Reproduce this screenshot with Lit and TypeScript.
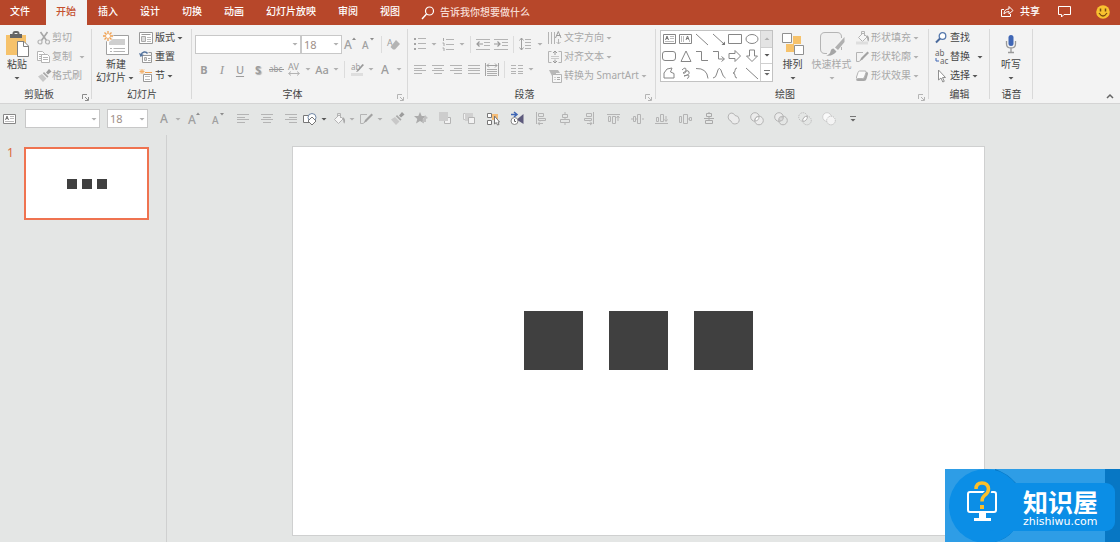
import { LitElement, html, svg, css, nothing } from "lit";
import type { SVGTemplateResult, TemplateResult } from "lit";
import { customElement } from "lit/decorators.js";

type Icon = { w: number; h: number; d: SVGTemplateResult };
const G = "#b4b4b4";
const S = "#868686";
const B = "#3f66b5";
const O = "#f6c26b";

const lines = (ys: number[], xs: [number, number][], c = G) =>
  ys.map((y, i) => svg`<path d="M${xs[i % xs.length][0]} ${y}.5H${xs[i % xs.length][1]}" stroke=${c} fill="none"/>`);

const letterUp = (up: boolean): SVGTemplateResult => svg`
  <text x="0" y="13" font-size=${up ? 12 : 10} fill="#a0a0a0" font-family="Noto Sans" font-weight="500">A</text>
  ${up ? svg`<path d="M8 4l2-2.5 2 2.5z" fill="#8c8c8c"/>` : svg`<path d="M8 2l2 2.5 2-2.5z" fill="#8c8c8c"/>`}`;

const bucket = svg`<path d="M3.500 7.500L8 3l4 4-4.500 4.500z" fill="#f6f6f6" stroke=${G}/><path d="M6.500 5V1.500h3V6" fill="none" stroke=${G}/><path d="M11.500 5c3 1.500 3 4 2 6.500C12 11 12.500 8 11.500 5z" fill="#a8a8a8"/>`;
const pen = svg`<path d="M8 2.500H1.500v9H4l4-3" fill="none" stroke=${G}/><path d="M12.500 1.500L6 8 5 10.500 7.500 9.500 14 3z" fill="#a2a2a2"/>`;
const brush = svg`<path d="M12 0l2.500 2.500L11 5.500 9 3.500z" fill="#9c9c9c"/><path d="M7 3l4.500 4.500-1.200 1.200L5.800 4.200z" fill="#a8a8a8"/><path d="M5 5l4.500 4.500L6 13 1 7.500z" fill="#c8c8c8"/>`;

const icons: Record<string, Icon> = {
  paste: { w: 24, h: 26, d: svg`<path d="M1 4h20v20H1z" fill=${O}/><path d="M5 3h12v4H5z" fill="#666"/><path d="M8.500 4V2.500Q8.500 1 10 1h2q1.500 0 1.500 1.500V4" fill="none" stroke="#666" stroke-width="2"/><path d="M12.500 10.500h6.500l4.500 4.500v10.500h-11z" fill="#fff" stroke="#808080"/><path d="M18.500 10.500v5h5" fill="none" stroke="#808080"/>` },
  cut: { w: 14, h: 14, d: svg`<path d="M3.500 1l6 8.500M10.500 1l-6 8.500" stroke="#a6a6a6" stroke-width="1.600"/><circle cx="3" cy="11" r="2" fill="none" stroke=${G} stroke-width="1.200"/><circle cx="10.500" cy="11" r="2" fill="none" stroke=${G} stroke-width="1.200"/>` },
  copy: { w: 14, h: 14, d: svg`<path d="M.5 1.500h5l2 2v7h-7z" fill="#fff" stroke=${G}/><path d="M2 4.500h3M2 6.500h3M2 8.500h3" stroke=${G}/><path d="M4.500 4.500h6l2 2v6h-8z" fill="#fff" stroke=${G}/><path d="M6 7.500h5M6 9.500h5" stroke=${G}/>` },
  brush: { w: 15, h: 14, d: brush },
  newSlide: { w: 26, h: 25, d: svg`<path d="M3.500 4.500h22v19h-22z" fill="#fff" stroke="#a0a0a0"/><path d="M9 8h13v6H6v-3z" fill="#cfcfcf"/><path d="M7 17.500h2M10.500 17.500H22M7 20.500h2M10.500 20.500H22" stroke="#b4b4b4"/><circle cx="5" cy="5" r="5.500" fill="#f3f3f3"/><path d="M5 0v10M0 5h10M1.500 1.500l7 7M8.500 1.500l-7 7" stroke="#f0a050" stroke-width="1.300"/><circle cx="5" cy="5" r="2" fill="#fff"/>` },
  layout: { w: 14, h: 14, d: svg`<path d="M.5 1.500h13v11H.5z" fill="#fff" stroke="#999"/><path d="M2.500 3.500h9" stroke="#999"/><path d="M2.500 5.500h4v5h-4z" fill="#ddd" stroke="#aaa"/><path d="M8 6.500h4M8 8.500h4M8 10.500h4" stroke="#bbb"/>` },
  reset: { w: 14, h: 14, d: svg`<path d="M3.500 5.500h9v7h-9z" fill="#fff" stroke="#999"/><path d="M5.500 7.500h2v3h-2z" fill="#ddd" stroke="#aaa"/><path d="M9 8.500h2.500M9 10.500h2.500" stroke="#aaa"/><path d="M2 5C3 1.500 7 1 8.500 3.500" fill="none" stroke="#56759f" stroke-width="1.500"/><path d="M0 3l1.500 4L5 5z" fill="#56759f"/><path d="M9.500 2.500h3v3" fill="none" stroke="#999"/>` },
  section: { w: 14, h: 14, d: svg`<path d="M3 0v5M.5 2.500h5M1 .5l4 4M5 .5l-4 4" stroke="#f2b06a"/><path d="M6 3.500h7" stroke="#f0a050"/><path d="M4.500 5.500h8v7h-8z" fill="#fff" stroke="#999"/><path d="M6 7.500h5M6 10.500h5" stroke="#bbb"/>` },
  up: { w: 14, h: 16, d: letterUp(true) },
  down: { w: 14, h: 16, d: letterUp(false) },
  clear: { w: 14, h: 14, d: svg`<text x="0" y="9" font-size="9" fill="#a0a0a0" font-family="Noto Sans">A</text><path d="M9 3l4 4-5 5.500H6L3.500 10z" fill="#b4b4b4"/>` },
  spacing: { w: 14, h: 14, d: svg`<text x="1" y="8" font-size="9" fill="#999" font-family="Noto Sans">AV</text><path d="M2 11.500h10M4 9.500l-2.500 2L4 13.500M10 9.500l2.500 2-2.500 2" fill="none" stroke=${G}/>` },
  strike: { w: 15, h: 12, d: svg`<text x="0" y="9" font-size="8" fill="#999" font-family="Noto Sans">abc</text><path d="M0 6.500h15" stroke="#999"/>` },
  highlight: { w: 15, h: 14, d: svg`<text x="1" y="8" font-size="8" fill="#999" font-family="Noto Sans">ab</text><path d="M12.500 2L7 8.500 6 10l2-.5L14 3z" fill="#999"/><path d="M1 12.500h12" stroke="#dedede" stroke-width="3"/>` },
  bullets: { w: 12, h: 12, d: svg`<path d="M0 0h2v2H0zM0 5h2v2H0zM0 10h2v2H0z" fill="#a4a4a4"/>${lines([0, 5, 10], [[4, 12]])}` },
  numbers: { w: 12, h: 13, d: svg`<path d="M1.500 0v3M.5 5h1.500v3M.5 10h1.500v3" stroke="#a8a8a8" fill="none"/>${lines([1, 6, 11], [[4, 12]])}` },
  outdent: { w: 14, h: 11, d: svg`${lines([0, 10], [[0, 14]])}${lines([3, 6], [[8, 14]])}<path d="M1 5h6M3.500 2.500L1 5l2.500 2.500" fill="none" stroke="#999" stroke-width="1.200"/>` },
  indent: { w: 14, h: 11, d: svg`${lines([0, 10], [[0, 14]])}${lines([3, 6], [[8, 14]])}<path d="M0 5h6M3.500 2.500L6 5 3.500 7.500" fill="none" stroke="#999" stroke-width="1.200"/>` },
  lineGap: { w: 14, h: 14, d: svg`<path d="M2.500 1v12M.5 3.500L2.500 1l2 2.500M.5 10.500l2 2.500 2-2.500" fill="none" stroke="#a0a0a0"/>${lines([2, 5, 8, 11], [[6, 12]])}` },
  left: { w: 12, h: 9, d: svg`${lines([0, 3, 5, 8], [[0, 12], [0, 8]])}` },
  center: { w: 12, h: 9, d: svg`${lines([0, 3, 5, 8], [[0, 12], [2, 10]])}` },
  right: { w: 12, h: 9, d: svg`${lines([0, 3, 5, 8], [[0, 12], [4, 12]])}` },
  justify: { w: 12, h: 9, d: svg`${lines([0, 3, 5, 8], [[0, 12]])}` },
  distribute: { w: 14, h: 13, d: svg`<path d="M.5 0v13M13.500 0v13" stroke="#a4a4a4"/><path d="M2 2.500h10M4 .5l-2 2 2 2M10 .5l2 2-2 2" fill="none" stroke="#a0a0a0"/>${lines([6, 8, 10, 12], [[2, 12]], "#adadad")}` },
  columns: { w: 12, h: 9, d: svg`${lines([0, 3, 6, 8], [[0, 5]])}${lines([0, 3, 6, 8], [[7, 12]])}` },
  textDir: { w: 14, h: 14, d: svg`<path d="M.5 1v12M3.500 1v12M6.500 1v12M10.500 8v5M8.500 11l2 2 2-2" fill="none" stroke=${G}/><path d="M7.500 7l2.800-6.500L13 7M8.500 4.500h4" fill="none" stroke="#9c9c9c"/>` },
  textAlign: { w: 14, h: 14, d: svg`<path d="M3.500 1.500h-3v11h3M10.500 1.500h3v11h-3" fill="none" stroke=${G}/><path d="M3 6.500h8M3 8.500h8" stroke="#cacaca"/><path d="M7 1v4M5 3l2-2 2 2M7 9.500V13M5 11l2 2 2-2" fill="none" stroke="#999"/>` },
  smart: { w: 14, h: 14, d: svg`<path d="M1 1h9l2 3H8v3H4z" fill="#b8b8b8"/><path d="M4.500 5.500h9v8h-9z" fill="#f6f6f6" stroke=${G}/><path d="M6.500 8.500h1M9 8.500h3M6.500 10.500h1M9 10.500h3" stroke="#aaa"/>` },
  arrange: { w: 24, h: 24, d: svg`<path d="M12 4h8v8h-8zM5 12h8v8H5z" fill=${O}/><path d="M1.500 1.500h9v9h-9zM13.500 13.500h9v9h-9z" fill="#fff" stroke="#909090"/>` },
  quick: { w: 26, h: 26, d: svg`<path d="M22.500 7V6q0-4.500-4.500-4.500H6Q1.500 1.500 1.500 6v12q0 4.500 4.500 4.500h2M22.500 16v3" fill="#f0f0f0" stroke=${G}/><path d="M25.500 6v5l-6.500 8-3-2.500z" fill="#b0b0b0"/><path d="M14.500 17.500l3 3Q14 25.500 7 24.500q4-1 4.500-4t3-3z" fill="#a6a6a6"/>` },
  fill: { w: 15, h: 15, d: svg`${bucket}<path d="M1 13h12" stroke="#dedede" stroke-width="3"/>` },
  bucket: { w: 15, h: 14, d: bucket },
  outline: { w: 15, h: 14, d: pen },
  effect: { w: 14, h: 14, d: svg`<path d="M3 10L5.500 3h6q2 0 1.500 2l-1.500 5q-.5 2-2.500 2H3Q.5 12 1.500 9.500z" fill="#a8a8a8"/><path d="M4.500 2h5.500q1.500 0 1 1.500L9.500 8Q9 9.500 7.500 9.500H2.500Q1 9.500 1.500 8L3 3.500Q3.500 2 4.500 2z" fill="#fafafa" stroke=${G}/>` },
  find: { w: 13, h: 12, d: svg`<circle cx="7.500" cy="4" r="3.300" fill="#fff" stroke="#5578ad" stroke-width="1.300"/><path d="M5 6.500L1 10.500" stroke="#4a6a9c" stroke-width="2"/>` },
  replace: { w: 14, h: 14, d: svg`<text x="0" y="6" font-size="8" fill="#666" font-family="Noto Sans">ab</text><text x="5" y="14" font-size="8" fill="#666" font-family="Noto Sans">ac</text><path d="M1 8v3h3" fill="none" stroke=${B}/>` },
  select: { w: 14, h: 14, d: svg`<path d="M3.500 1v10L6 9l1.800 4 1.500-.7L7.500 8.500h3z" fill="#fff" stroke="#909090"/>` },
  mic: { w: 12, h: 20, d: svg`<rect x="3.500" y="1" width="5" height="11" rx="2.500" fill=${B}/><path d="M1.500 7v3q0 4 4.500 4t4.500-4V7M6 14v4M3 18.500h6" fill="none" stroke="#999" stroke-width="1.300"/>` },
  search: { w: 14, h: 14, d: svg`<circle cx="8.500" cy="5" r="4" fill="none" stroke="#fff" stroke-width="1.200"/><path d="M5.500 8L1 13" stroke="#fff" stroke-width="1.400"/>` },
  share: { w: 14, h: 13, d: svg`<path d="M4 4.500H1.500v7h9V9" fill="none" stroke="#fff"/><path d="M4 9q0-5 5-5V1.500L13 5.500 9 9V6.500Q6 6.500 4 9z" fill="none" stroke="#fff"/>` },
  comment: { w: 15, h: 13, d: svg`<path d="M1.500 1.500h12v8H7L4.500 12V9.500h-3z" fill="none" stroke="#fff"/>` },
  smile: { w: 14, h: 14, d: svg`<circle cx="7" cy="7" r="6.800" fill="#f9c22f"/><path d="M4.500 3.500v3M9.500 3.500v3" stroke="#7a4a10" stroke-width="1.500"/><path d="M3 8q4 6 8 0" fill="none" stroke="#7a4a10" stroke-width="1.300"/>` },
  chevron: { w: 8, h: 6, d: svg`<path d="M1 5l3-3 3 3" fill="none" stroke="#666" stroke-width="1.500"/>` },
  textbox: { w: 13, h: 12, d: svg`<path d="M.5 1.500h12v9H.5z" fill="#fff" stroke=${S}/><path d="M2.500 7l1.500-4 1.500 4M3 5.500h2" fill="none" stroke="#777"/><path d="M7 3.500h4M7 5.500h4M2 8.500h9" stroke="#bbb"/>` },
  vtextbox: { w: 13, h: 12, d: svg`<path d="M.5 1.500h12v9H.5z" fill="#fff" stroke=${S}/><path d="M2.500 3v6M4.500 3v6M10.500 7v2" stroke="#bbb"/><path d="M7 7l1.500-4L10 7M7.500 5.500h2" fill="none" stroke="#777"/>` },
  line: { w: 14, h: 14, d: svg`<path d="M1 2l12 11" stroke=${S}/>` },
  arrow: { w: 14, h: 14, d: svg`<path d="M1 2l11 10" stroke=${S}/><path d="M13 13V9.500L9.500 13z" fill="#777"/>` },
  rect: { w: 14, h: 12, d: svg`<path d="M.5 1.500h13v9H.5z" fill="#fff" stroke=${S}/>` },
  oval: { w: 14, h: 12, d: svg`<ellipse cx="7" cy="6" rx="6" ry="4.500" fill="#fff" stroke=${S}/>` },
  round: { w: 14, h: 12, d: svg`<rect x=".5" y="1.500" width="13" height="9" rx="2.500" fill="#fff" stroke=${S}/>` },
  tri: { w: 12, h: 12, d: svg`<path d="M6 1l5 10.500H1z" fill="#fff" stroke=${S}/>` },
  elbow: { w: 14, h: 12, d: svg`<path d="M1 1.500h5.500v9H13" fill="none" stroke=${S}/>` },
  elbowArrow: { w: 14, h: 12, d: svg`<path d="M1 1.500h5.500v7.500H12M9.500 6.500L12.500 9l-3 2.500" fill="none" stroke=${S}/>` },
  rArrow: { w: 14, h: 14, d: svg`<path d="M1 4.500h6V1.500L12.500 7 7 12.500v-3H1z" fill="#fff" stroke=${S}/>` },
  dArrow: { w: 14, h: 14, d: svg`<path d="M4.500 1h5v6h3L7 12.500 1.500 7h3z" fill="#fff" stroke=${S}/>` },
  free: { w: 12, h: 12, d: svg`<path d="M1 11V6L4 2l5-1-1.500 4L11 6.500V11z" fill="#fff" stroke=${S}/>` },
  scribble: { w: 10, h: 12, d: svg`<path d="M1 3q4-4 4 0T2 6q5-4 6-1T3 9q5-2 5 0T6 11.500" fill="none" stroke=${S}/>` },
  arc: { w: 14, h: 12, d: svg`<path d="M1 1.500q11-.5 12 10" fill="none" stroke=${S}/>` },
  curve: { w: 14, h: 12, d: svg`<path d="M1 11q3 0 4-5t2.500-4.500T10 6t3.500 5" fill="none" stroke=${S}/>` },
  brace: { w: 6, h: 12, d: svg`<path d="M5 1q-2 0-2 2.500T1 6q2 0 2 2.500T5 11" fill="none" stroke=${S}/>` },
  shapes: { w: 15, h: 14, d: svg`<path d="M.5 3.500h9v7h-9z" fill="#fff" stroke="#777"/><circle cx="9" cy="5.500" r="4" fill="#fff" stroke="#6f86a5"/><path d="M9 5l4 4-4 4-4-4z" fill="#fff" stroke="#777"/>` },
  star: { w: 15, h: 13, d: svg`<path d="M6 0l1.700 4H12L8.700 7 10 11.500 6 9 2 11.500 3.300 7 0 4h4.300z" fill="#ababab"/><path d="M11 3l3 3-2 1v3H8z" fill="#c0c0c0"/>` },
  front: { w: 12, h: 13, d: svg`<path d="M5.500 5.500h6v6h-6z" fill="#f2f2f2" stroke=${G}/><path d="M0 0h9v9H0z" fill="#cdcdcd"/>` },
  back: { w: 12, h: 13, d: svg`<path d="M.5 1.500h6v6h-6z" fill="#f2f2f2" stroke="#c4c4c4"/><path d="M2 1h8v8H2z" fill="#d0d0d0"/><path d="M5.500 5.500h6v6h-6z" fill="#f2f2f2" stroke=${G}/>` },
  pick: { w: 14, h: 14, d: svg`<path d="M6 2h6v6H6z" fill="#f5bd78"/><path d="M1.500 1.500h4v4h-4zM1.500 8.500h4v4h-4z" fill="#fff" stroke="#777"/><path d="M8.500 4v8l1.800-1.500L11.500 13l1.500-.5L12 10h1.500z" fill="#fff" stroke="#777"/>` },
  anim: { w: 15, h: 15, d: svg`<path d="M1 3.500h5M4 1l3 2.500L4 6" fill="none" stroke=${B} stroke-width="1.500"/><circle cx="4.500" cy="10" r="3.500" fill="#fff" stroke="#888"/><path d="M4.500 8v2.500H6" fill="none" stroke="#666"/><path d="M8 7.500L13.500 3v10L8 9.500z" fill="#5d5a7c"/>` },
  aLeft: { w: 12, h: 13, d: svg`<path d="M1.500 0v12M3.500 1.500h5v3h-5zM3.500 6.500h7v2h-7zM3 11.500h5M5 9.500l-2 2 2 1.500" fill="none" stroke=${G}/>` },
  aCenter: { w: 12, h: 13, d: svg`<path d="M6 0v2M3.500 2.500h5v3h-5zM6 5.500v2M1.500 7.500h9v3h-9zM6 10.500V13" fill="none" stroke=${G}/>` },
  aRight: { w: 12, h: 13, d: svg`<path d="M10.500 0v12M3.500 1.500h5v3h-5zM1.500 6.500h7v2h-7zM4 11.500h5M7 9.500l2 2-2 1.500" fill="none" stroke=${G}/>` },
  aTop: { w: 13, h: 12, d: svg`<path d="M0 1.500h13M1.500 3.500h2v5h-2zM5.500 3.500h3v7h-3zM11 3v5M9.500 5L11 3l1.500 2" fill="none" stroke=${G}/>` },
  aMid: { w: 13, h: 12, d: svg`<path d="M0 6h2M2.500 3.500h2v5h-2zM6.500 1.500h3v9h-3zM11 6h2M5 6h1" fill="none" stroke=${G}/>` },
  aBot: { w: 13, h: 12, d: svg`<path d="M0 10.500h13M1.500 4.500h2v4h-2zM5.500 1.500h3v7h-3zM11 3v5M9.500 6.500L11 8.500l1.500-2" fill="none" stroke=${G}/>` },
  dHor: { w: 13, h: 12, d: svg`<path d="M.5 3.500h2v6h-2zM4.500 1.500h4v9h-4zM10.500 4.500h2v3h-2zM8.500 6h2" fill="none" stroke=${G}/>` },
  dVer: { w: 12, h: 13, d: svg`<path d="M1 6.500h10M3.500 1.500h5v3h-5zM2.500 8.500h7v3h-7zM6 0v1M6 5v3" fill="none" stroke="#aaa"/>` },
  union: { w: 14, h: 14, d: svg`<path d="M5 1a4 4 0 0 1 4 2.500A4.200 4.200 0 1 1 5 9 4.200 4.200 0 0 1 5 1z" fill="#ececec" stroke=${G}/>` },
  combine: { w: 14, h: 14, d: svg`<circle cx="5" cy="5" r="4.300" fill="#ececec" stroke=${G}/><circle cx="9" cy="8.500" r="4.300" fill="#ececec" stroke=${G}/><path d="M9 4.500a4.300 4.300 0 0 1-4 4.500 4.300 4.300 0 0 1 4-4.500z" fill="#fff" stroke=${G}/>` },
  fragment: { w: 14, h: 14, d: svg`<circle cx="5" cy="5" r="4.300" fill="#ebebeb" stroke=${G}/><circle cx="9" cy="8.500" r="4.300" fill="none" stroke=${G}/><circle cx="7" cy="6.800" r="2" fill="#d8d8d8" stroke="#bdbdbd"/>` },
  intersect: { w: 14, h: 14, d: svg`<g stroke-dasharray="1 1"><circle cx="5" cy="5" r="4.300" fill="none" stroke=${G}/><circle cx="9" cy="8.500" r="4.300" fill="none" stroke=${G}/></g><path d="M9.300 4.300a4.300 4.300 0 0 1-4.500 5 4.300 4.300 0 0 1 4.500-5z" fill="#fff" stroke=${G}/>` },
  subtract: { w: 14, h: 14, d: svg`<circle cx="5" cy="5" r="4.300" fill="#fafafa" stroke="#d0d0d0"/><circle cx="9" cy="8.500" r="4.300" fill="#f4f4f4" stroke=${G} stroke-dasharray="1 1"/>` },
  more: { w: 6, h: 7, d: svg`<path d="M0 1.500h6" stroke="#777"/><path d="M.5 4h5L3 6.500z" fill="#666"/>` },
  launch: { w: 7, h: 7, d: svg`<path d="M.5 5V.5H5M3 3l3 3M6.500 3v3.500H3" fill="none" stroke="currentColor"/>` },
};

const ico = (name: string) => {
  const i = icons[name];
  return html`<svg class="ico" width=${i.w} height=${i.h} viewBox="0 0 ${i.w} ${i.h}" aria-hidden="true">${i.d}</svg>`;
};
const caret = (on = false) =>
  html`<svg class="caret" width="10" height="6" viewBox="0 0 10 6" aria-hidden="true"><path d="M2.500 2h5L5 4.500z" fill=${on ? "#555" : "#b0b0b0"}/></svg>`;
const tool = (label: string, content: unknown, drop = false, on = false) =>
  html`<button class="tool" aria-label=${label}><span class="cell">${content}</span>${drop ? caret(on) : nothing}</button>`;
const t = (icon: string, label: string, drop = false, on = false) => tool(label, ico(icon), drop, on);
const row = (icon: string, label: string, on = false, drop = false, far = false) =>
  html`<button class="row ${on ? "on" : ""}"><span class="slot">${ico(icon)}</span><span>${label}</span>${drop ? html`<span class=${far ? "far" : ""}>${caret(on)}</span>` : nothing}</button>`;
const big = (icon: string, label: TemplateResult | string, on = true, tail = true) =>
  html`<button class="big ${on ? "on" : ""}"><span class="pic">${ico(icon)}</span><span>${label}</span>${tail ? html`<span class="tail">${caret(on)}</span>` : nothing}</button>`;
const combo = (label: string, value: string, cls: string) =>
  html`<span class="combo ${cls}"><select aria-label=${label}><option>${value}</option></select>${caret()}</span>`;
const group = (name: string, cls: string, body: TemplateResult, launcher = false) =>
  html`<section class="group ${cls}" aria-label=${name}>
    <div class="body">${body}</div>
    <div class="foot"><span class="name">${name}</span>${launcher ? html`<button class="launch" aria-label="${name}设置">${ico("launch")}</button>` : nothing}</div>
  </section>`;

const gallery = ["textbox", "vtextbox", "line", "arrow", "rect", "oval", "round", "tri", "elbow", "elbowArrow", "rArrow", "dArrow", "free", "scribble", "arc", "curve", "brace", "line"];
const quickTools: [string, string][] = [
  ["brush", "格式刷"], ["star", "动画"], ["front", "上移一层"], ["back", "下移一层"], ["pick", "选择窗格"], ["anim", "动画窗格"],
  ["aLeft", "左对齐"], ["aCenter", "水平居中"], ["aRight", "右对齐"], ["aTop", "顶端对齐"], ["aMid", "垂直居中"], ["aBot", "底端对齐"],
  ["dHor", "横向分布"], ["dVer", "纵向分布"], ["union", "结合"], ["combine", "组合"], ["fragment", "拆分"], ["intersect", "相交"], ["subtract", "剪除"], ["more", "更多"],
];

@customElement("app-root")
export class AppRoot extends LitElement {
  static styles = css`
    :host { display: flex; flex-direction: column; position: relative; min-height: 100vh; background: #e4e6e5; font: 10px/13px "Noto Sans", "Noto Sans CJK SC", sans-serif; color: #444; overflow: hidden; }
    * { box-sizing: border-box; }
    button { font: inherit; color: #a8a8a8; background: none; border: 0; padding: 0; margin: 0; display: flex; align-items: center; white-space: nowrap; }
    button.on { color: #444; }
    .ico, .caret { display: block; flex: none; overflow: visible; }
    .tabs { display: flex; height: 25px; background: #b7472a; padding-right: 10px; }
    .tabs button { color: #fff; padding: 0 11px 2px 10px; margin-right: 1px; font-weight: 500; }
    .tabs .file { margin-right: 5px; }
    .tabs .active { background: #f3f3f3; color: #c4502f; }
    .tabs .tell { padding-left: 9px; gap: 5px; color: #f6dcd4; padding-bottom: 0; }
    .tabs .end { margin-left: auto; display: flex; gap: 17px; }
    .tabs .end button { padding: 0 0 2px; margin: 0; gap: 6px; }
    .tabs .end .face { margin-left: 7px; }
    .ribbon { display: flex; background: #f3f3f3; border-bottom: 1px solid #d4d4d4; padding-top: 3px; height: 79px; }
    .group { display: flex; flex-direction: column; flex: none; position: relative; }
    .group::after { content: ""; position: absolute; right: 0; top: 1px; bottom: 4px; width: 1px; background: #d9d9d9; }
    .body { display: flex; height: 57px; }
    .foot { display: flex; align-items: center; height: 18px; }
    .name { flex: 1; text-align: center; }
    .launch { width: 15px; height: 18px; padding-left: 4px; padding-top: 6px; color: #b4b4b4; }
    .clip .launch { width: 14px; color: #8a8a8a; }
    .clip { width: 92px; } .slides { width: 100px; } .font { width: 216px; } .para { width: 248px; } .draw { width: 273px; } .edit { width: 61px; } .voice { width: 43px; }
    .rows { display: flex; flex-direction: column; }
    .row { height: 19px; }
    .slot { width: 16px; flex: none; display: flex; }
    .far { margin-left: 5px; }
    .big { flex-direction: column; padding-top: 1px; flex: none; }
    .pic { height: 29px; display: flex; align-items: center; }
    .tail { height: 13px; display: flex; align-items: center; }
    .two { display: flex; flex-direction: column; align-items: center; }
    .two span { display: flex; align-items: center; }
    .clip .body { padding-left: 5px; gap: 8px; }
    .clip .big { width: 24px; }
    .clip .slot { width: 15px; }
    .slides .body { padding-left: 4px; gap: 3px; }
    .slides .big { width: 40px; }
    .font .body { padding-left: 3px; }
    .para .body { padding-left: 3px; }
    .para .tools { width: 137px; }
    .draw .body { padding-left: 4px; }
    .draw .big { width: 39px; }
    .draw .rows { padding-left: 4px; }
    .edit .body { padding-left: 6px; }
    .edit .slot { width: 15px; }
    .voice .big { width: 42px; }
    .line1 { display: flex; height: 32px; align-items: center; }
    .line2 { display: flex; height: 18px; align-items: center; }
    .tool { height: 18px; flex: none; }
    .cell { width: 18px; display: flex; justify-content: center; align-items: center; }
    .sep { width: 1px; height: 17px; margin: 0 3px; background: #dcdcdc; flex: none; }
    .combo { position: relative; height: 19px; flex: none; display: flex; align-items: center; }
    .combo select { appearance: none; width: 100%; height: 19px; border: 1px solid #c8c8c8; border-radius: 0; background: #fff; font: 11px/13px "Noto Sans", sans-serif; color: #a08f88; padding: 0 0 0 2px; margin: 0; }
    .combo .caret { position: absolute; right: 1px; pointer-events: none; }
    .face-name { width: 106px; }
    .size { width: 41px; }
    .g { font-size: 11px; font-weight: 500; color: #9c9c9c; }
    .b { font-weight: 700; }
    .i { font-style: italic; font-family: "Liberation Serif", serif; font-size: 13px; }
    .u { text-decoration: underline; text-underline-offset: 2px; }
    .s { text-shadow: 1px 1px 1px #aaa; font-weight: 700; }
    .a { font-size: 12px; }
    .gallery { display: flex; width: 113px; height: 52px; margin: 2px 0 0; border: 1px solid #c2c2c2; background: #fff; flex: none; }
    .shapes { flex: 1; display: grid; grid-template-columns: repeat(6, 1fr); grid-template-rows: repeat(3, 1fr); }
    .shapes button { justify-content: center; }
    .scroll { width: 12px; display: grid; grid-template-rows: repeat(3, 1fr); border-left: 1px solid #d0d0d0; }
    .scroll button { justify-content: center; border-bottom: 1px solid #d0d0d0; }
    .scroll button:first-child { background: #e4e4e4; }
    .scroll button:last-child { border-bottom: 0; }
    .flip { transform: rotate(180deg); }
    .fold { margin: auto 6px 4px auto; }
    .quick { display: flex; align-items: center; height: 29px; }
    .quick .combo { margin-left: 7px; }
    .quick .face-name { width: 75px; }
    .lead { margin-right: 7px; display: flex; }
    .wide .cell { width: 24px; }
    .wide { display: flex; }
    .first { margin-right: -2px; }
    .work { display: flex; flex: 1; padding-top: 2px; }
    .pane { width: 167px; flex: none; border-right: 1px solid #cfd0d0; display: flex; align-items: flex-start; padding-top: 12px; }
    .num { width: 24px; padding-left: 7px; font-size: 12px; line-height: 12px; color: #dc6a3c; }
    .thumb { width: 125px; height: 73px; border: 2px solid #ef7350; background: #fff; justify-content: center; gap: 5px; }
    .thumb i { width: 10px; height: 10px; background: #404040; }
    .stage { flex: 1; padding: 11px 135px 4px 125px; }
    .slide { aspect-ratio: 16 / 9; background: #fff; border: 1px solid #cfd0d0; display: flex; align-items: center; justify-content: center; gap: 26px; }
    .slide i { width: 59px; height: 59px; background: #404040; }
    .brand { position: absolute; right: 0; bottom: 0; width: 175px; height: 73px; color: #fff; }
    .brand svg { position: absolute; inset: 0; }
    .brand div { position: absolute; left: 78px; top: 19px; }
    .brand b { display: block; font: 700 25px/27px "Noto Sans CJK SC", sans-serif; }
    .brand span { display: block; font: 11px/13px "DejaVu Sans", sans-serif; }
  `;

  render() {
    return html`
      <nav class="tabs" aria-label="功能区">
        <button class="file">文件</button>
        <button class="active">开始</button>
        ${["插入", "设计", "切换", "动画", "幻灯片放映", "审阅", "视图"].map((x) => html`<button>${x}</button>`)}
        <button class="tell">${ico("search")}告诉我你想要做什么</button>
        <span class="end"><button>${ico("share")}共享</button><button aria-label="批注">${ico("comment")}</button><button class="face" aria-label="反馈">${ico("smile")}</button></span>
      </nav>
      <div class="ribbon">
        ${group("剪贴板", "clip", html`${big("paste", "粘贴")}<div class="rows">${row("cut", "剪切")}${row("copy", "复制", false, true, true)}${row("brush", "格式刷")}</div>`, true)}
        ${group("幻灯片", "slides", html`${big("newSlide", html`<span class="two"><span>新建</span><span>幻灯片${caret(true)}</span></span>`, true, false)}<div class="rows">${row("layout", "版式", true, true)}${row("reset", "重置", true)}${row("section", "节", true, true)}</div>`)}
        ${group("字体", "font", html`<div class="tools">
          <div class="line1">${combo("字体", "", "face-name")}${combo("字号", "18", "size")}${t("up", "增大字号")}${t("down", "减小字号")}<span class="sep"></span>${t("clear", "清除格式")}</div>
          <div class="line2">${tool("加粗", html`<span class="g b">B</span>`)}${tool("倾斜", html`<span class="g i">I</span>`)}${tool("下划线", html`<span class="g u">U</span>`)}${tool("阴影", html`<span class="g s">S</span>`)}${t("strike", "删除线")}${t("spacing", "字符间距", true)}${tool("更改大小写", html`<span class="g">Aa</span>`, true)}<span class="sep"></span>${t("highlight", "突出显示", true)}${tool("字体颜色", html`<span class="g a">A</span>`, true)}</div>
        </div>`, true)}
        ${group("段落", "para", html`<div class="tools">
          <div class="line1">${t("bullets", "项目符号", true)}${t("numbers", "编号", true)}<span class="sep"></span>${t("outdent", "减少缩进")}${t("indent", "增加缩进")}<span class="sep"></span>${t("lineGap", "行距", true)}</div>
          <div class="line2">${t("left", "左对齐")}${t("center", "居中")}${t("right", "右对齐")}${t("justify", "两端对齐")}${t("distribute", "分散对齐")}<span class="sep"></span>${t("columns", "分栏", true)}</div>
        </div><div class="rows">${row("textDir", "文字方向", false, true)}${row("textAlign", "对齐文本", false, true)}${row("smart", "转换为 SmartArt", false, true)}</div>`, true)}
        ${group("绘图", "draw", html`<div class="gallery"><div class="shapes">${gallery.map((g) => html`<button aria-label="形状">${ico(g)}</button>`)}</div>
          <div class="scroll"><button aria-label="向上"><span class="flip">${caret()}</span></button><button aria-label="向下">${caret(true)}</button><button aria-label="其他">${ico("more")}</button></div></div>
          ${big("arrange", "排列")}${big("quick", "快速样式", false)}
          <div class="rows">${row("fill", "形状填充", false, true)}${row("outline", "形状轮廓", false, true)}${row("effect", "形状效果", false, true)}</div>`, true)}
        ${group("编辑", "edit", html`<div class="rows">${row("find", "查找", true)}${row("replace", "替换", true, true, true)}${row("select", "选择", true, true)}</div>`)}
        ${group("语音", "voice", html`${big("mic", "听写")}`)}
        <button class="fold" aria-label="折叠功能区">${ico("chevron")}</button>
      </div>
      <div class="quick">
        ${t("textbox", "文本框")}${combo("字体", "", "face-name")}${combo("字号", "18", "size")}
        <span class="lead"></span>${tool("字体颜色", html`<span class="g a">A</span>`, true)}
        <span class="wide first">${t("up", "增大字号")}${t("down", "减小字号")}${t("left", "左对齐")}${t("center", "居中")}${t("right", "右对齐")}</span>
        ${t("shapes", "形状", true, true)}${t("bucket", "形状填充", true)}${t("outline", "形状轮廓", true)}
        <span class="wide">${quickTools.map(([i, l]) => t(i, l))}</span>
      </div>
      <main class="work">
        <aside class="pane"><span class="num">1</span><button class="thumb" aria-label="幻灯片 1"><i></i><i></i><i></i></button></aside>
        <div class="stage"><div class="slide"><i></i><i></i><i></i></div></div>
      </main>
      <div class="brand">
        <svg width="175" height="73" viewBox="0 0 175 73" aria-hidden="true">
          <path d="M0 0h175v73H0z" fill="#2e9de6"/><path d="M160 0h15v73h-15z" fill="#0777c4"/>
          <path d="M50 0Q62 4 71 14H50zM50 73Q62 70 68 62H50z" fill="#0777c4"/>
          <circle cx="41" cy="37" r="37" fill="#0b8ee6"/><rect x="40" y="14" width="130" height="48" rx="9" fill="#0b8ee6"/>
          <rect x="23" y="23" width="28" height="20" rx="2" fill="none" stroke="#fff" stroke-width="2"/>
          <path d="M34 44h7v5h5v3H29v-3h5z" fill="#fff"/>
          <path d="M31 20q0-6 6-6t6.500 6q0 4-4 6.500-2.500 2-2.500 6" fill="none" stroke="#0b8ee6" stroke-width="6"/>
          <path d="M31 20q0-6 6-6t6.500 6q0 4-4 6.500-2.500 2-2.500 6" fill="none" stroke="#fbbf2b" stroke-width="3.500"/><path d="M35 36h4v4h-4z" fill="#fbbf2b"/>
        </svg>
        <div><b>知识屋</b><span>zhishiwu.com</span></div>
      </div>
    `;
  }
}
